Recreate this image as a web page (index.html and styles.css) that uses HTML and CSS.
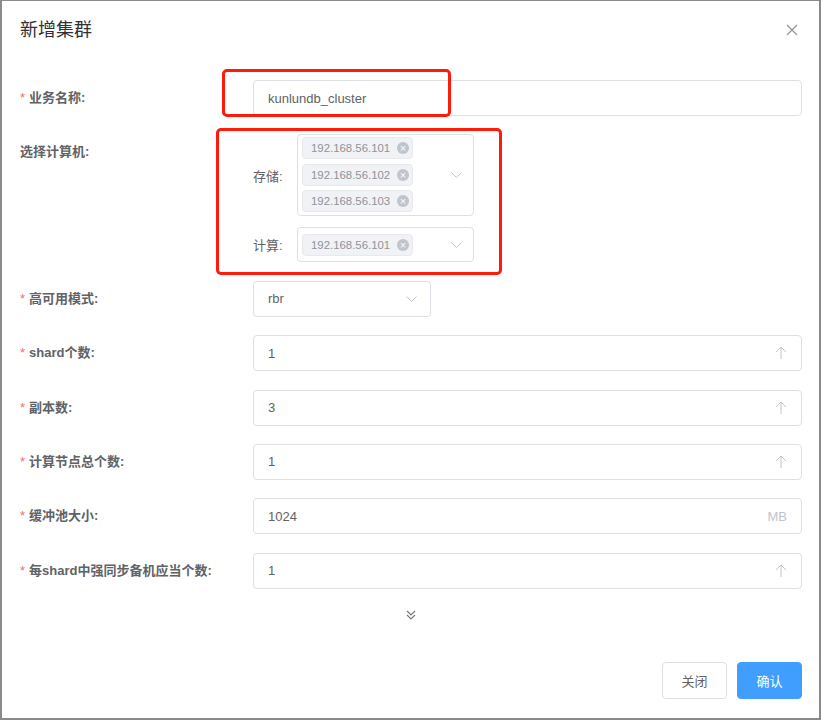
FILE: index.html
```html
<!DOCTYPE html>
<html lang="zh-CN">
<head>
    <meta charset="UTF-8">
    <meta name="viewport" content="width=device-width, initial-scale=1.0">
    <title>新增集群</title>
    <link rel="stylesheet" href="styles.css">
</head>
<body>

<div class="dialog">
    <div class="dialog-header">
        <span class="dialog-title">新增集群</span>
        <svg class="close-btn" width="12" height="12" viewBox="0 0 12 12"><path d="M1 1L11 11M11 1L1 11" stroke="#909399" stroke-width="1.2" fill="none"/></svg>
    </div>

    <div class="form">
        <div class="form-item">
            <label class="form-label"><i class="req">*</i>业务名称:</label>
            <div class="form-content">
                <div class="input">kunlundb_cluster</div>
                <div class="mark mark-name"></div>
            </div>
        </div>

        <div class="form-item">
            <label class="form-label">选择计算机:</label>
            <div class="form-content">
                <div class="sub-item">
                    <span class="sub-label">存储:</span>
                    <div class="select multi">
                        <div class="tags">
                            <span class="tag">192.168.56.101<i class="tag-close">×</i></span>
                            <span class="tag">192.168.56.102<i class="tag-close">×</i></span>
                            <span class="tag">192.168.56.103<i class="tag-close">×</i></span>
                        </div>
                        <svg class="arrow" width="11" height="6" viewBox="0 0 11 6"><path d="M0.5 0.5L5.5 5.5L10.5 0.5" stroke="#c0c4cc" fill="none"/></svg>
                    </div>
                </div>
                <div class="sub-item compute">
                    <span class="sub-label">计算:</span>
                    <div class="select single">
                        <div class="tags">
                            <span class="tag">192.168.56.101<i class="tag-close">×</i></span>
                        </div>
                        <svg class="arrow" width="11" height="6" viewBox="0 0 11 6"><path d="M0.5 0.5L5.5 5.5L10.5 0.5" stroke="#c0c4cc" fill="none"/></svg>
                    </div>
                </div>
                <div class="mark mark-hosts"></div>
            </div>
        </div>

        <div class="form-item">
            <label class="form-label"><i class="req">*</i>高可用模式:</label>
            <div class="form-content">
                <div class="input short">rbr
                    <svg class="arrow" width="11" height="6" viewBox="0 0 11 6"><path d="M0.5 0.5L5.5 5.5L10.5 0.5" stroke="#c0c4cc" fill="none"/></svg>
                </div>
            </div>
        </div>

        <div class="form-item">
            <label class="form-label"><i class="req">*</i>shard个数:</label>
            <div class="form-content">
                <div class="input">1
                    <svg class="up" width="12" height="14" viewBox="0 0 12 14"><path d="M6 1V13M1 6L6 1L11 6" stroke="#c0c4cc" fill="none"/></svg>
                </div>
            </div>
        </div>

        <div class="form-item">
            <label class="form-label"><i class="req">*</i>副本数:</label>
            <div class="form-content">
                <div class="input">3
                    <svg class="up" width="12" height="14" viewBox="0 0 12 14"><path d="M6 1V13M1 6L6 1L11 6" stroke="#c0c4cc" fill="none"/></svg>
                </div>
            </div>
        </div>

        <div class="form-item">
            <label class="form-label"><i class="req">*</i>计算节点总个数:</label>
            <div class="form-content">
                <div class="input">1
                    <svg class="up" width="12" height="14" viewBox="0 0 12 14"><path d="M6 1V13M1 6L6 1L11 6" stroke="#c0c4cc" fill="none"/></svg>
                </div>
            </div>
        </div>

        <div class="form-item">
            <label class="form-label"><i class="req">*</i>缓冲池大小:</label>
            <div class="form-content">
                <div class="input">1024<span class="suffix">MB</span></div>
            </div>
        </div>

        <div class="form-item">
            <label class="form-label"><i class="req">*</i>每shard中强同步备机应当个数:</label>
            <div class="form-content">
                <div class="input">1
                    <svg class="up" width="12" height="14" viewBox="0 0 12 14"><path d="M6 1V13M1 6L6 1L11 6" stroke="#c0c4cc" fill="none"/></svg>
                </div>
            </div>
        </div>
    </div>

    <div class="more">
        <svg width="10" height="10" viewBox="0 0 10 10"><path d="M1 1L5 5L9 1M1 5L5 9L9 5" stroke="#7a7a7a" stroke-width="1.2" fill="none"/></svg>
    </div>

    <div class="dialog-footer">
        <button class="btn">关闭</button>
        <button class="btn btn-primary">确认</button>
    </div>
</div>

</body>
</html>
```

FILE: styles.css
```css
/* 对话框整体 */
body {
    margin: 0;
    font-family: "Liberation Sans", "Noto Sans CJK SC", sans-serif;
    background: #fff;
}
.dialog {
    width: 821px;
    height: 720px;
    box-sizing: border-box;
    border: 2px solid #8a8a8a;
    border-top-width: 1px;
    background: #fff;
}
.dialog-header {
    display: flex;
    justify-content: space-between;
    align-items: center;
    padding: 16px 21px 0 18px;
    height: 25px;
}
.dialog-title {
    font-size: 18px;
    line-height: 24px;
    color: #303133;
}
.form {
    margin-top: 38px;
    padding: 0 17px 0 18px;
}
.form-item {
    display: flex;
    margin-bottom: 18.4px;
}
.form-label {
    width: 233px;
    flex-shrink: 0;
    font-size: 13px;
    font-weight: bold;
    line-height: 36px;
    color: #606266;
}
.req {
    font-style: normal;
    font-weight: normal;
    color: #f56c6c;
    margin-right: 4px;
}
.form-content {
    flex: 1;
    position: relative;
}
.input {
    height: 36px;
    box-sizing: border-box;
    border: 1px solid #dcdfe6;
    border-radius: 4px;
    padding: 0 14px;
    display: flex;
    align-items: center;
    justify-content: space-between;
    font-size: 13px;
    color: #606266;
}
.input.short {
    width: 178px;
}
.input .arrow {
    margin-right: -1px;
}
.suffix {
    color: #c0c4cc;
}
/* 选择计算机 */
.sub-item {
    display: flex;
    align-items: center;
}
.sub-item.compute {
    margin-top: 11px;
}
.sub-label {
    width: 44px;
    font-size: 13px;
    color: #606266;
}
.select {
    width: 177px;
    box-sizing: border-box;
    border: 1px solid #dcdfe6;
    border-radius: 4px;
    display: flex;
    align-items: center;
    justify-content: space-between;
    padding-left: 4px;
    padding-right: 11px;
}
.select.multi {
    padding-top: 2px;
    padding-bottom: 3px;
}
.select.single {
    height: 35px;
}
.tags {
    display: flex;
    flex-direction: column;
    gap: 4.5px;
}
.tag {
    display: flex;
    align-items: center;
    justify-content: space-between;
    width: 111px;
    height: 22px;
    box-sizing: border-box;
    padding: 0 3px 0 8px;
    background: #f0f2f5;
    border: 1px solid #e9e9eb;
    border-radius: 4px;
    font-size: 11.4px;
    color: #909399;
}
.tag-close {
    font-style: normal;
    width: 12px;
    height: 12px;
    border-radius: 50%;
    background: #c0c4cc;
    color: #fff;
    font-size: 11px;
    line-height: 12px;
    text-align: center;
}
/* 红色标注框 */
.mark {
    position: absolute;
    border: 3px solid #ff1a0a;
    border-radius: 5px;
    box-sizing: border-box;
}
.mark-name {
    left: -31px;
    top: -11px;
    width: 229px;
    height: 48px;
}
.mark-hosts {
    left: -37px;
    top: -6px;
    width: 286px;
    height: 147px;
}
.more {
    height: 16px;
    display: flex;
    justify-content: center;
    align-items: center;
}
.dialog-footer {
    display: flex;
    justify-content: flex-end;
    gap: 10px;
    margin-top: 39px;
    padding-right: 17px;
}
.btn {
    width: 65px;
    height: 37px;
    border: 1px solid #dcdfe6;
    border-radius: 4px;
    background: #fff;
    color: #606266;
    font-family: inherit;
    font-size: 13px;
    cursor: pointer;
}
.btn-primary {
    background: #409eff;
    border-color: #409eff;
    color: #fff;
}
```
